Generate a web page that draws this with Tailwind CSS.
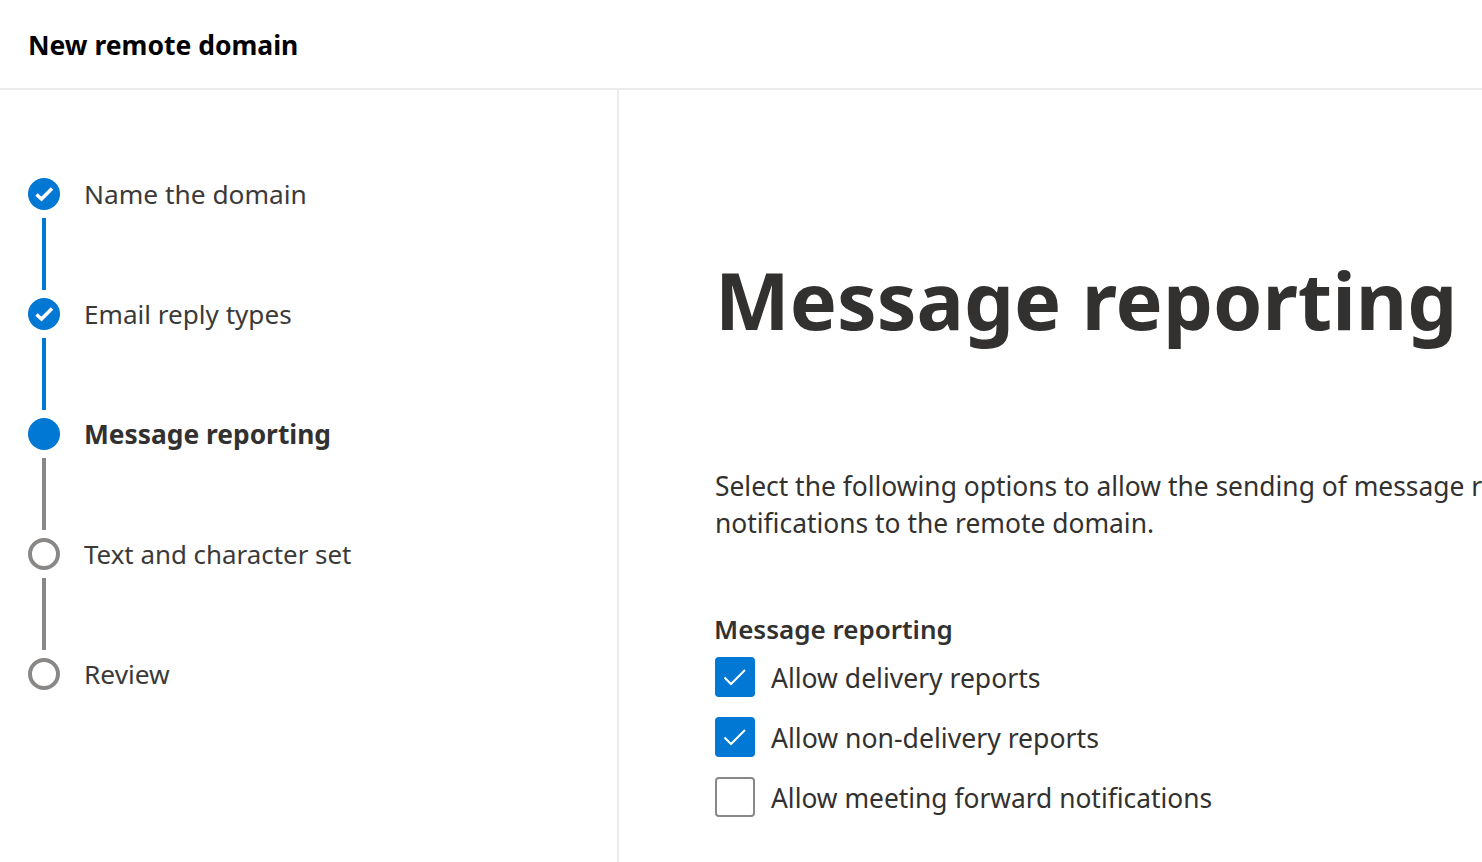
<!DOCTYPE html>
<html lang="en">
<head>
    <meta charset="UTF-8">
    <title>New remote domain</title>
    <script src="https://cdn.jsdelivr.net/npm/@tailwindcss/browser@4"></script>
</head>
<body class="h-[862px] overflow-hidden bg-white font-['Noto_Sans',sans-serif] text-[#323130]">
    <header class="h-[90px] border-b-2 border-[#edebe9] pl-[28px] pt-[27px]">
        <h2 class="text-[26.5px] leading-[36px] font-bold text-black">New remote domain</h2>
    </header>
    <div class="flex h-[772px]">
        <nav class="w-[619px] shrink-0 border-r-2 border-[#edebe9] pl-[28px] pt-[88px]">
            <div class="flex h-[32px] items-center gap-[24px]">
                <span class="h-[32px] w-[32px] rounded-full bg-[#0078d4]">
                    <svg class="h-[32px] w-[32px]" viewBox="0 0 32 32" fill="none" stroke="white" stroke-width="3.500"><path d="M8.500 16.500l5 4.500 10.500-10.500"/></svg>
                </span>
                <span class="pt-[2px] text-[26.300px] text-[#3b3a39]">Name the domain</span>
            </div>
            <div class="ml-[14px] my-[8px] h-[72px] w-[4px] bg-[#0078d4]"></div>
            <div class="flex h-[32px] items-center gap-[24px]">
                <span class="h-[32px] w-[32px] rounded-full bg-[#0078d4]">
                    <svg class="h-[32px] w-[32px]" viewBox="0 0 32 32" fill="none" stroke="white" stroke-width="3.500"><path d="M8.500 16.500l5 4.500 10.500-10.500"/></svg>
                </span>
                <span class="pt-[2px] text-[26.100px] text-[#3b3a39]">Email reply types</span>
            </div>
            <div class="ml-[14px] my-[8px] h-[72px] w-[4px] bg-[#0078d4]"></div>
            <div class="flex h-[32px] items-center gap-[24px]">
                <span class="h-[32px] w-[32px] rounded-full bg-[#0078d4]"></span>
                <span class="pt-[2px] text-[26.350px] font-bold">Message reporting</span>
            </div>
            <div class="ml-[14px] my-[8px] h-[72px] w-[4px] bg-[#8a8886]"></div>
            <div class="flex h-[32px] items-center gap-[24px]">
                <span class="h-[32px] w-[32px] rounded-full border-4 border-[#8a8886]"></span>
                <span class="text-[25.900px] text-[#3b3a39]">Text and character set</span>
            </div>
            <div class="ml-[14px] my-[8px] h-[72px] w-[4px] bg-[#8a8886]"></div>
            <div class="flex h-[32px] items-center gap-[24px]">
                <span class="h-[32px] w-[32px] rounded-full border-4 border-[#8a8886]"></span>
                <span class="pt-[2px] text-[26.300px] text-[#3b3a39]">Review</span>
            </div>
        </nav>
        <main class="min-w-0 flex-1 pl-[96px] pt-[153px]">
            <h1 class="text-[79.200px] leading-[112px] font-bold whitespace-nowrap">Message reporting</h1>
            <p class="mt-[113px] w-[900px] text-[26.400px] leading-[37px]">Select the following options to allow the sending of message reporting notifications to the remote domain.</p>
            <h3 class="-ml-px mt-[69px] text-[26px] leading-[36px] font-semibold">Message reporting</h3>
            <div class="mt-[10px] flex flex-col gap-[20px]">
                <label class="flex h-[40px] items-center gap-[16px]">
                    <span class="h-[40px] w-[40px] rounded-[4px] bg-[#0078d4]">
                        <svg class="h-[40px] w-[40px]" viewBox="0 0 40 40" fill="none" stroke="white" stroke-width="2"><path d="M9.500 20.500l6.500 6.500 14-14"/></svg>
                    </span>
                    <span class="pt-[4px] text-[26.500px]">Allow delivery reports</span>
                </label>
                <label class="flex h-[40px] items-center gap-[16px]">
                    <span class="h-[40px] w-[40px] rounded-[4px] bg-[#0078d4]">
                        <svg class="h-[40px] w-[40px]" viewBox="0 0 40 40" fill="none" stroke="white" stroke-width="2"><path d="M9.500 20.500l6.500 6.500 14-14"/></svg>
                    </span>
                    <span class="pt-[4px] text-[26.600px]">Allow non-delivery reports</span>
                </label>
                <label class="flex h-[40px] items-center gap-[16px]">
                    <span class="h-[40px] w-[40px] rounded-[4px] border-2 border-[#8a8886]"></span>
                    <span class="pt-[4px] text-[26.350px]">Allow meeting forward notifications</span>
                </label>
            </div>
        </main>
    </div>
</body>
</html>
